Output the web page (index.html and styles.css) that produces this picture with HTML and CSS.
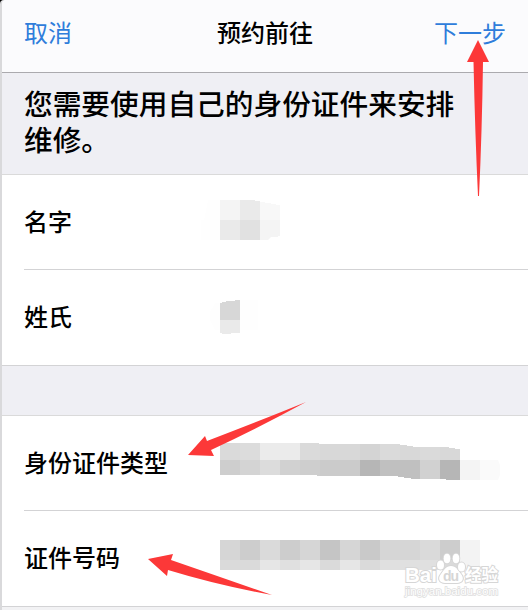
FILE: index.html
```html
<!DOCTYPE html>
<html lang="zh-CN">
<head>
	<meta charset="utf-8">
	<title>预约前往</title>
	<link rel="stylesheet" href="styles.css">
</head>
<body>
	<div class="phone">
		<div class="nav">
			<a class="link">取消</a>
			<h1 class="title">预约前往</h1>
			<a class="link next">下一步</a>
		</div>
		<h2 class="tip">您需要使用自己的身份证件来安排维修。</h2>
		<ul class="list">
			<li>
				<span class="label">名字</span>
				<svg class="value" viewBox="200 175 328 94">
					<path fill="#fefefe" d="M208 200h12v40h-19v-20h3z"/>
					<path fill="#f4f4f4" d="M220 200h20v20h-20z"/>
					<path fill="#eaeaea" d="M240 200h15v1h5v19h-20zM220 220h20v20h-20z"/>
					<path fill="#e1e1e1" d="M240 220h20v20h-20z"/>
					<path fill="#f8f8f8" d="M260 202h5v1h6v1h5v1h4v15h-20z"/>
					<path fill="#f4f4f4" d="M260 220h20v16h-2v1h-7l-3 3h-8z"/>
				</svg>
			</li>
			<li>
				<span class="label">姓氏</span>
				<svg class="value" viewBox="200 270 328 94">
					<path fill="#fefefe" d="M215 303h5v27h-5l-5-10v-8zM240 300h18v30h-18z"/>
					<path fill="#d7d7d7" d="M220 303h2v-1h4v-1h9v-1h5v20h-20z"/>
					<path fill="#eaeaea" d="M220 320h20v13h-9v1h-9v-1h-2z"/>
				</svg>
			</li>
		</ul>
		<ul class="list second">
			<li>
				<span class="label">身份证件类型</span>
				<svg class="value" viewBox="200 416 328 94">
					<clipPath id="edge">
						<path d="M220 443h99v1h81v1h7v1h6v1h36v1h6v1h5v11h38l2 5v10l-2 5h-52v-1h-35v-1h-7v-1h-6v-1h-81v-1h-97z"/>
					</clipPath>
					<g clip-path="url(#edge)">
						<path fill="#dadada" d="M220 443h20v17h-20zM300 443h20v17h-20zM380 443h20v17h-20zM420 443h20v17h-20z"/>
						<path fill="#dcdcdc" d="M240 443h20v17h-20zM260 460h20v20h-20z"/>
						<path fill="#ebebeb" d="M260 443h40v17h-40z"/>
						<path fill="#d8d8d8" d="M320 443h40v17h-40zM400 443h20v17h-20zM440 443h20v17h-20z"/>
						<path fill="#d4d4d4" d="M360 443h20v17h-20zM240 460h20v20h-20z"/>
						<path fill="#cecece" d="M220 460h20v20h-20zM300 460h20v20h-20z"/>
						<path fill="#d1d1d1" d="M280 460h20v20h-20zM420 460h20v20h-20z"/>
						<path fill="#cbcbcb" d="M320 460h40v20h-40z"/>
						<path fill="#b6b6b6" d="M360 460h20v20h-20zM440 460h20v20h-20z"/>
						<path fill="#c0c0c0" d="M380 460h40v20h-40z"/>
						<path fill="#f4f4f4" d="M460 460h20v20h-20z"/>
						<path fill="#fafafa" d="M480 460h20v20h-20z"/>
					</g>
				</svg>
			</li>
			<li>
				<span class="label">证件号码</span>
				<svg class="value" viewBox="200 511 328 94">
					<path fill="#d6d6d6" d="M220 540h20v20h-20zM300 540h20v20h-20zM340 540h20v20h-20zM380 540h40v20h-40z"/>
					<path fill="#cdcdcd" d="M240 540h20v20h-20zM280 540h20v20h-20zM440 540h20v20h-20z"/>
					<path fill="#dadada" d="M260 540h20v20h-20zM420 540h20v20h-20zM220 560h40v10h-40zM320 560h20v10h-20zM360 560h20v10h-20zM440 560h20v10h-20z"/>
					<path fill="#c5c5c5" d="M320 540h20v20h-20z"/>
					<path fill="#c9c9c9" d="M360 540h20v20h-20z"/>
					<path fill="#e6e6e6" d="M260 560h20v10h-20zM300 560h20v10h-20zM340 560h20v10h-20z"/>
					<path fill="#e0e0e0" d="M280 560h20v10h-20zM380 560h60v10h-60z"/>
					<path fill="#f3f3f3" d="M460 540h20v30h-20z"/>
				</svg>
			</li>
		</ul>
	</div>

	<!-- 水印 -->
	<svg class="layer" viewBox="0 0 528 610">
		<g class="mark">
			<text x="405" y="582" font-size="20" textLength="32" lengthAdjust="spacingAndGlyphs">Bai</text>
			<path d="M451 566c5 0 7 4 10 8 4 5 1 9-4 9h-12c-5 0-8-4-4-9 3-4 5-8 10-8z"/>
			<ellipse cx="440.500" cy="565" rx="3.500" ry="4.500"/>
			<ellipse cx="447" cy="558.500" rx="3.300" ry="4.800"/>
			<ellipse cx="456" cy="558.500" rx="3.300" ry="4.800"/>
			<ellipse cx="461.500" cy="567" rx="3.500" ry="4.500"/>
			<text class="du" x="443" y="581" font-size="14" textLength="16">du</text>
			<text x="465" y="581" font-size="16.500" textLength="33">经验</text>
			<text class="url" x="405" y="595" font-size="11" textLength="93" lengthAdjust="spacingAndGlyphs">jingyan.baidu.com</text>
		</g>
		<!-- 红色箭头 -->
		<g class="arrow">
			<path d="M478 40l11 22h-6q-1 70-4 134h-1q-3-64-4.500-134h-6.500z"/>
			<path d="M188 455l17-19 2 5q55-21 99-39-44 24-95 48l3 6z"/>
			<path d="M148 559l25-5-2 6q52 18 101 35-55-10-104-25l-1 6z"/>
		</g>
	</svg>
</body>
</html>
```

FILE: styles.css
```css
*{
	margin: 0;
	padding: 0;
	box-sizing: border-box;
}
body{
	height: 610px;
	overflow: hidden;
	background: #000;
	font-family: "Liberation Sans", "Noto Sans CJK SC", sans-serif;
	color: #000;
}
ul{
	list-style: none;
}
.phone{
	height: 610px;
	border-left: 2px solid #d9d9db;
	border-top-left-radius: 4px;
	background: #f2f2f4;
}
.nav{
	display: grid;
	grid-template-columns: 1fr auto 1fr;
	height: 73px;
	padding: 0 22px 4px;
	align-items: center;
	border-bottom: 1px solid #abaaae;
	border-top-left-radius: 4px;
	background: #fbfbfd;
}
.link{
	font-size: 24px;
	line-height: 36px;
	color: #2f7ddb;
	font-weight: 400;
}
.next{
	text-align: right;
}
.title{
	font-size: 24px;
	line-height: 36px;
	font-weight: 500;
}
.tip{
	height: 102px;
	padding: 14px 60px 0 22px;
	border-bottom: 1px solid #dadada;
	background: #efeff4;
	font-size: 28.7px;
	line-height: 36px;
	font-weight: 500;
}
.list{
	background: #fff;
	border-bottom: 1px solid #d3d3d5;
}
.list li{
	display: flex;
	align-items: center;
	height: 95px;
	margin-left: 22px;
	border-bottom: 1px solid #d3d3d5;
}
.list li:last-child{
	border-bottom: 0;
}
.second{
	padding-top: 1px;
	border-top: 49px solid #efeff4;
	box-shadow: inset 0 1px #dadada;
}
.label{
	width: 176px;
	padding-top: 1px;
	font-size: 24px;
	line-height: 36px;
	font-weight: 500;
}
.value{
	width: 328px;
	height: 94px;
	flex: none;
	align-self: flex-start;
}
.layer{
	position: absolute;
	left: 0;
	top: 0;
	width: 528px;
	height: 610px;
}
.mark{
	fill: #fff;
	stroke: #d6d6d6;
	stroke-width: 2px;
	paint-order: stroke;
	font-weight: bold;
}
.mark .du{
	fill: #d6d6d6;
	stroke: none;
}
.mark .url{
	stroke: #dedede;
	stroke-width: 1.5px;
	font-weight: normal;
}
.arrow{
	fill: #fc3838;
}
```
